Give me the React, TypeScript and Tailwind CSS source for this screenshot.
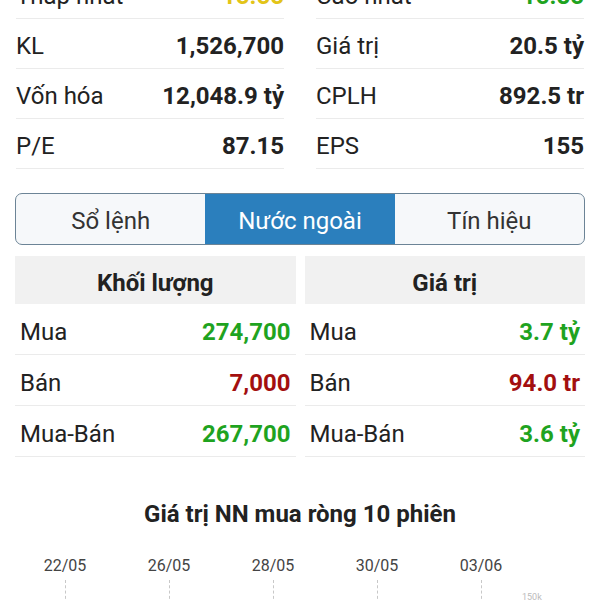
import React from "react";

const stats: [string, string, string, string, string?, string?][] = [
  ["Thấp nhất", "15.55", "Cao nhất", "15.85", "text-[#e3c418]", "text-[#1fa31f]"],
  ["KL", "1,526,700", "Giá trị", "20.5 tỷ"],
  ["Vốn hóa", "12,048.9 tỷ", "CPLH", "892.5 tr"],
  ["P/E", "87.15", "EPS", "155"],
];

const foreign = {
  vol: [
    ["Mua", "274,700", "text-[#1fa31f]"],
    ["Bán", "7,000", "text-[#a30f0f]"],
    ["Mua-Bán", "267,700", "text-[#1fa31f]"],
  ],
  val: [
    ["Mua", "3.7 tỷ", "text-[#1fa31f]"],
    ["Bán", "94.0 tr", "text-[#a30f0f]"],
    ["Mua-Bán", "3.6 tỷ", "text-[#1fa31f]"],
  ],
};

const dates = ["22/05", "26/05", "28/05", "30/05", "03/06"];

function StatRow({ label, value, color }: { label: string; value: string; color?: string }) {
  return (
    <div className="flex h-[50px] items-center justify-between border-b border-[#ebebeb] pt-[5px]">
      <span className="text-[#222]">{label}</span>
      <span className={`font-bold ${color ?? "text-[#222]"}`}>{value}</span>
    </div>
  );
}

function Table({ title, rows }: { title: string; rows: string[][] }) {
  return (
    <div>
      <div className="flex h-[48px] items-center justify-center bg-[#f1f1f1] pt-[5px] font-bold text-[#222]">
        {title}
      </div>
      {rows.map(([label, value, color]) => (
        <div
          key={label}
          className="flex h-[51px] items-center justify-between border-b border-[#ebebeb] px-[5px] pt-[5px]"
        >
          <span className="text-[#222]">{label}</span>
          <span className={`font-bold ${color}`}>{value}</span>
        </div>
      ))}
    </div>
  );
}

export default function App() {
  return (
    <div
      className="h-[600px] w-[600px] overflow-hidden bg-white text-[24px] leading-none"
      style={{ fontFamily: "Roboto, 'Liberation Sans', sans-serif" }}
    >
      <div className="-mt-[31px] grid grid-cols-2 gap-x-[32px] px-[16px]">
        <div>
          {stats.map(([l, v, , , c]) => (
            <StatRow key={l} label={l} value={v} color={c} />
          ))}
        </div>
        <div>
          {stats.map(([, , l, v, , c]) => (
            <StatRow key={l} label={l} value={v} color={c} />
          ))}
        </div>
      </div>

      <div className="mx-[15px] mt-[24px] grid h-[52px] grid-cols-3 overflow-hidden rounded-[7px] border-[1.5px] border-[#6c8496] bg-[#f6f8fa]">
        <div className="flex items-center justify-center pt-[4px] text-[#333]">Sổ lệnh</div>
        <div className="flex items-center justify-center bg-[#2b7fbd] pt-[4px] text-white">Nước ngoài</div>
        <div className="flex items-center justify-center pt-[4px] text-[#333]">Tín hiệu</div>
      </div>

      <div className="mt-[11px] grid grid-cols-2 gap-x-[9px] px-[15px]">
        <Table title="Khối lượng" rows={foreign.vol} />
        <Table title="Giá trị" rows={foreign.val} />
      </div>

      <div className="mt-[40px] flex h-[30px] items-center justify-center pt-[3px] text-[24px] font-bold text-[#222]">
        Giá trị NN mua ròng 10 phiên
      </div>

      <div className="relative mt-[28px] flex pl-[13px]">
        {dates.map((d) => (
          <div key={d} className="flex w-[104px] flex-col items-center">
            <span className="flex h-[20px] items-center pt-[2px] text-[16px] text-[#444]">{d}</span>
            <div className="mt-[5px] h-[40px] border-l border-dashed border-[#c8c8c8]" />
          </div>
        ))}
        <span className="absolute left-[522px] top-[38px] text-[9px] text-[#bbb]">150k</span>
      </div>
    </div>
  );
}
